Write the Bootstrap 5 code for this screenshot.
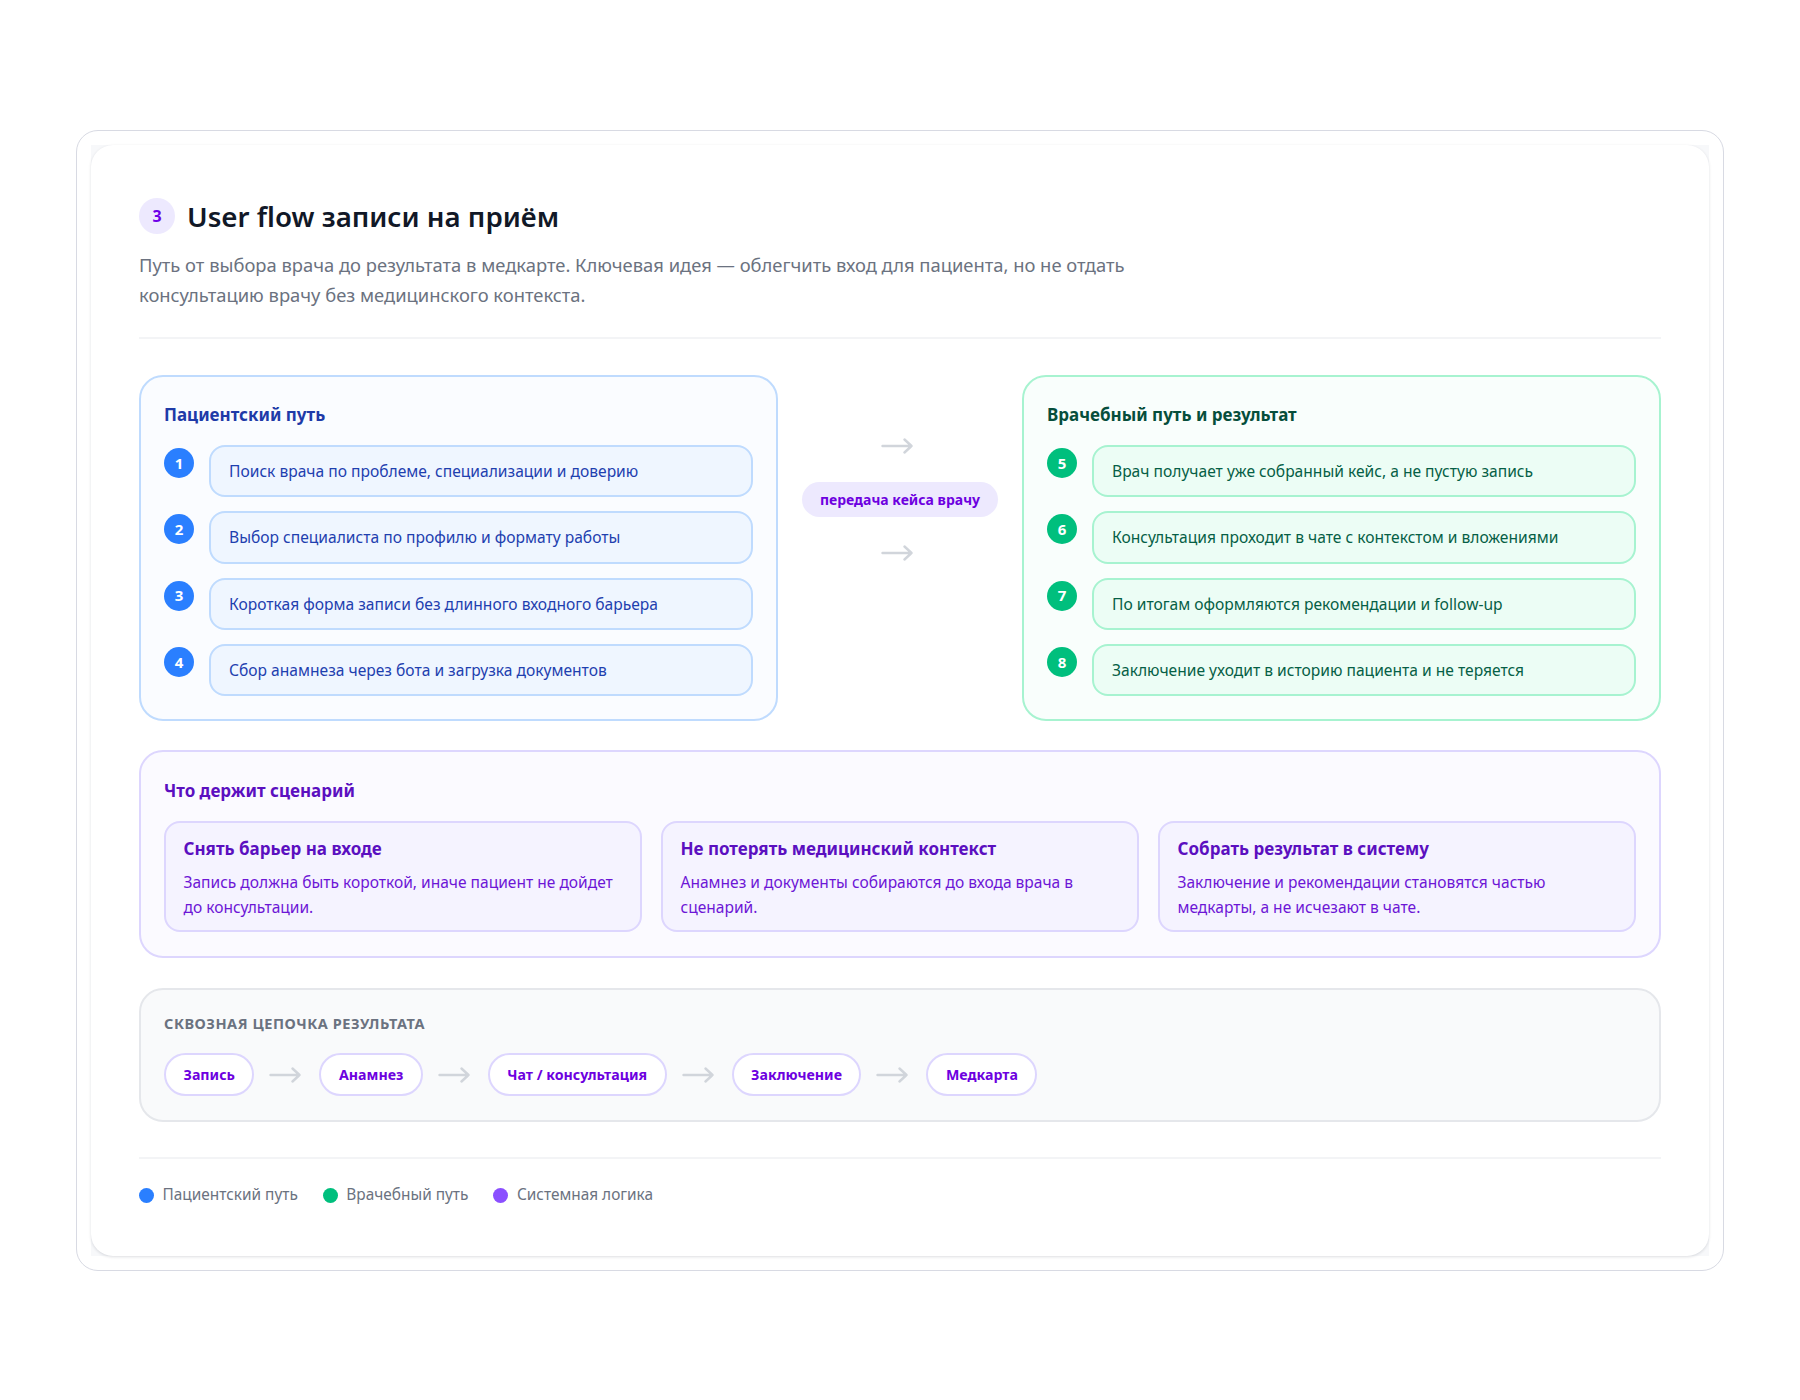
<!DOCTYPE html>
<html lang="ru">
<head>
    <meta charset="UTF-8" />
    <title>User flow записи на приём</title>
    <link href="https://cdn.jsdelivr.net/npm/bootstrap@5.3.2/dist/css/bootstrap.min.css" rel="stylesheet" />
    <style>
        body { background: #fff; font-family: "Noto Sans", "Open Sans", sans-serif; color: #111827; }
        .frame { margin: 130px 76px 0; padding: 14px; border: 1px solid #d8dae3; border-radius: 22px; }
        .frame-inner { background: #f7f8fa; }
        .sheet { background: #fff; border-radius: 22px; padding: 48px 48px 49px 48px; box-shadow: 0 1px 3px rgba(17, 24, 39, .14); }
        .sec-num { width: 36px; height: 36px; background: #ede9fe; color: #6d00e8; font-size: 16px; font-weight: 700; }
        .sec-title { font-size: 27.7px; line-height: 44px; font-weight: 600; margin: 1px 0 0; }
        .sec-sub { font-size: 18.37px; line-height: 30px; color: #6b7280; max-width: 1010px; margin: 12px 0 0; }
        .sec-head { padding-bottom: 27px; border-bottom: 2px solid #f3f4f6; margin-bottom: 36px; }

        .panel { border: 2px solid; border-radius: 24px; padding: 23px; }
        .panel-title { font-size: 17px; line-height: 30px; font-weight: 700; margin-bottom: 15px; }
        .path-col { flex: 0 0 639px; }
        .step-list { gap: 14px; }
        .step-row { gap: 15px; }
        .step-num { width: 30px; height: 30px; margin-top: 3px; flex-shrink: 0; color: #fff; font-size: 15px; font-weight: 700; }
        .step-box { flex: 1; height: 52.3px; padding: 1px 18px 0; border: 2px solid; border-radius: 16px; font-size: 15.6px; display: flex; align-items: center; }

        .blue-panel { border-color: #bfdbfe; background: #fafcff; }
        .blue-panel .panel-title { color: #1e3aa8; }
        .blue-panel .step-num { background: #2a7fff; }
        .blue-panel .step-box { border-color: #bfdbfe; background: #eff6ff; color: #1e40af; }

        .green-panel { border-color: #a7f3d0; background: #f9fefc; }
        .green-panel .panel-title { color: #064e3b; }
        .green-panel .step-num { background: #00bf7d; }
        .green-panel .step-box { border-color: #a7f3d0; background: #ecfdf5; color: #065f46; }

        .handoff { padding-top: 63px; gap: 28px; }
        .handoff .flow-arrow { margin-right: 7px; }
        .handoff-pill { background: #ede9fe; color: #6d00e0; font-size: 14px; font-weight: 700; height: 35px; padding: 0 18px; }

        .flow-arrow { width: 32px; height: 16px; margin-right: 3px; flex-shrink: 0; fill: none; stroke: #d1d5db; stroke-width: 2.4; stroke-linecap: round; stroke-linejoin: round; }

        .why-panel { border-color: #ddd6fe; background: #fbfaff; margin-top: 29px; padding-top: 24px; padding-bottom: 24px; }
        .why-panel .panel-title { color: #5b0fc0; }
        .why-grid { gap: 19px; }
        .why-card { flex: 1 1 0; background: #f5f3ff; border: 2px solid #ddd6fe; border-radius: 16px; padding: 13px 17.5px 10px; height: 111px; }
        .why-card h3 { font-size: 17px; line-height: 26px; font-weight: 700; color: #5b0fc0; margin: 0 0 8px; }
        .why-card p { font-size: 15.55px; line-height: 25px; color: #6d16d6; margin: 0; }

        .chain-panel { border-color: #e5e7eb; background: #f9fafb; margin-top: 30px; padding-bottom: 24px; }
        .chain-title { font-size: 14.5px; line-height: 20px; font-weight: 700; letter-spacing: .54px; color: #6b7280; text-transform: uppercase; margin: 0 0 20px; }
        .chain-row { gap: 15px; }
        .chain-pill { height: 43px; padding: 0 17.5px; background: #fff; border: 2px solid #ddd6fe; color: #6d00e0; font-size: 14.2px; font-weight: 700; }

        .legend-row { margin-top: 35px; padding-top: 24px; border-top: 2px solid #f3f4f6; gap: 25px; font-size: 15.4px; line-height: 24px; color: #6b7280; }
        .legend-item { gap: 8.5px; }
        .legend-dot { width: 15px; height: 15px; }
    </style>
</head>
<body>
<div class="frame">
    <div class="frame-inner">
        <div class="sheet">
            <div class="sec-head">
                <div class="d-flex align-items-center gap-2">
                    <span class="sec-num rounded-circle d-flex align-items-center justify-content-center me-1">3</span>
                    <h2 class="sec-title">User flow записи на приём</h2>
                </div>
                <p class="sec-sub">Путь от выбора врача до результата в медкарте. Ключевая идея — облегчить вход для пациента, но не отдать консультацию врачу без медицинского контекста.</p>
            </div>

            <div class="d-flex justify-content-between align-items-start">
                <div class="panel blue-panel path-col">
                    <div class="panel-title">Пациентский путь</div>
                    <div class="d-flex flex-column step-list">
                        <div class="d-flex step-row"><span class="step-num rounded-circle d-flex align-items-center justify-content-center">1</span><div class="step-box">Поиск врача по проблеме, специализации и доверию</div></div>
                        <div class="d-flex step-row"><span class="step-num rounded-circle d-flex align-items-center justify-content-center">2</span><div class="step-box">Выбор специалиста по профилю и формату работы</div></div>
                        <div class="d-flex step-row"><span class="step-num rounded-circle d-flex align-items-center justify-content-center">3</span><div class="step-box">Короткая форма записи без длинного входного барьера</div></div>
                        <div class="d-flex step-row"><span class="step-num rounded-circle d-flex align-items-center justify-content-center">4</span><div class="step-box">Сбор анамнеза через бота и загрузка документов</div></div>
                    </div>
                </div>

                <div class="handoff d-flex flex-column align-items-center flex-grow-1">
                    <svg class="flow-arrow" viewBox="0 0 32 16"><path d="M1.500 8H30.500M23.500 1.500 30.500 8 23.500 14.500"/></svg>
                    <span class="handoff-pill rounded-pill d-flex align-items-center">передача кейса врачу</span>
                    <svg class="flow-arrow" viewBox="0 0 32 16"><path d="M1.500 8H30.500M23.500 1.500 30.500 8 23.500 14.500"/></svg>
                </div>

                <div class="panel green-panel path-col">
                    <div class="panel-title">Врачебный путь и результат</div>
                    <div class="d-flex flex-column step-list">
                        <div class="d-flex step-row"><span class="step-num rounded-circle d-flex align-items-center justify-content-center">5</span><div class="step-box">Врач получает уже собранный кейс, а не пустую запись</div></div>
                        <div class="d-flex step-row"><span class="step-num rounded-circle d-flex align-items-center justify-content-center">6</span><div class="step-box">Консультация проходит в чате с контекстом и вложениями</div></div>
                        <div class="d-flex step-row"><span class="step-num rounded-circle d-flex align-items-center justify-content-center">7</span><div class="step-box">По итогам оформляются рекомендации и follow-up</div></div>
                        <div class="d-flex step-row"><span class="step-num rounded-circle d-flex align-items-center justify-content-center">8</span><div class="step-box">Заключение уходит в историю пациента и не теряется</div></div>
                    </div>
                </div>
            </div>

            <div class="panel why-panel">
                <div class="panel-title">Что держит сценарий</div>
                <div class="d-flex why-grid">
                    <div class="why-card">
                        <h3>Снять барьер на входе</h3>
                        <p>Запись должна быть короткой, иначе пациент не дойдет до консультации.</p>
                    </div>
                    <div class="why-card">
                        <h3>Не потерять медицинский контекст</h3>
                        <p>Анамнез и документы собираются до входа врача в сценарий.</p>
                    </div>
                    <div class="why-card">
                        <h3>Собрать результат в систему</h3>
                        <p>Заключение и рекомендации становятся частью медкарты, а не исчезают в чате.</p>
                    </div>
                </div>
            </div>

            <div class="panel chain-panel">
                <div class="chain-title">Сквозная цепочка результата</div>
                <div class="d-flex align-items-center chain-row">
                    <span class="chain-pill rounded-pill d-flex align-items-center">Запись</span>
                    <svg class="flow-arrow" viewBox="0 0 32 16"><path d="M1.500 8H30.500M23.500 1.500 30.500 8 23.500 14.500"/></svg>
                    <span class="chain-pill rounded-pill d-flex align-items-center">Анамнез</span>
                    <svg class="flow-arrow" viewBox="0 0 32 16"><path d="M1.500 8H30.500M23.500 1.500 30.500 8 23.500 14.500"/></svg>
                    <span class="chain-pill rounded-pill d-flex align-items-center">Чат / консультация</span>
                    <svg class="flow-arrow" viewBox="0 0 32 16"><path d="M1.500 8H30.500M23.500 1.500 30.500 8 23.500 14.500"/></svg>
                    <span class="chain-pill rounded-pill d-flex align-items-center">Заключение</span>
                    <svg class="flow-arrow" viewBox="0 0 32 16"><path d="M1.500 8H30.500M23.500 1.500 30.500 8 23.500 14.500"/></svg>
                    <span class="chain-pill rounded-pill d-flex align-items-center">Медкарта</span>
                </div>
            </div>

            <div class="legend-row d-flex align-items-center">
                <div class="legend-item d-flex align-items-center"><span class="legend-dot rounded-circle" style="background:#2a7fff"></span>Пациентский путь</div>
                <div class="legend-item d-flex align-items-center"><span class="legend-dot rounded-circle" style="background:#00bf7d"></span>Врачебный путь</div>
                <div class="legend-item d-flex align-items-center"><span class="legend-dot rounded-circle" style="background:#8b4fff"></span>Системная логика</div>
            </div>
        </div>
    </div>
</div>
<script src="https://cdn.jsdelivr.net/npm/bootstrap@5.3.2/dist/js/bootstrap.bundle.min.js"></script>
</body>
</html>
